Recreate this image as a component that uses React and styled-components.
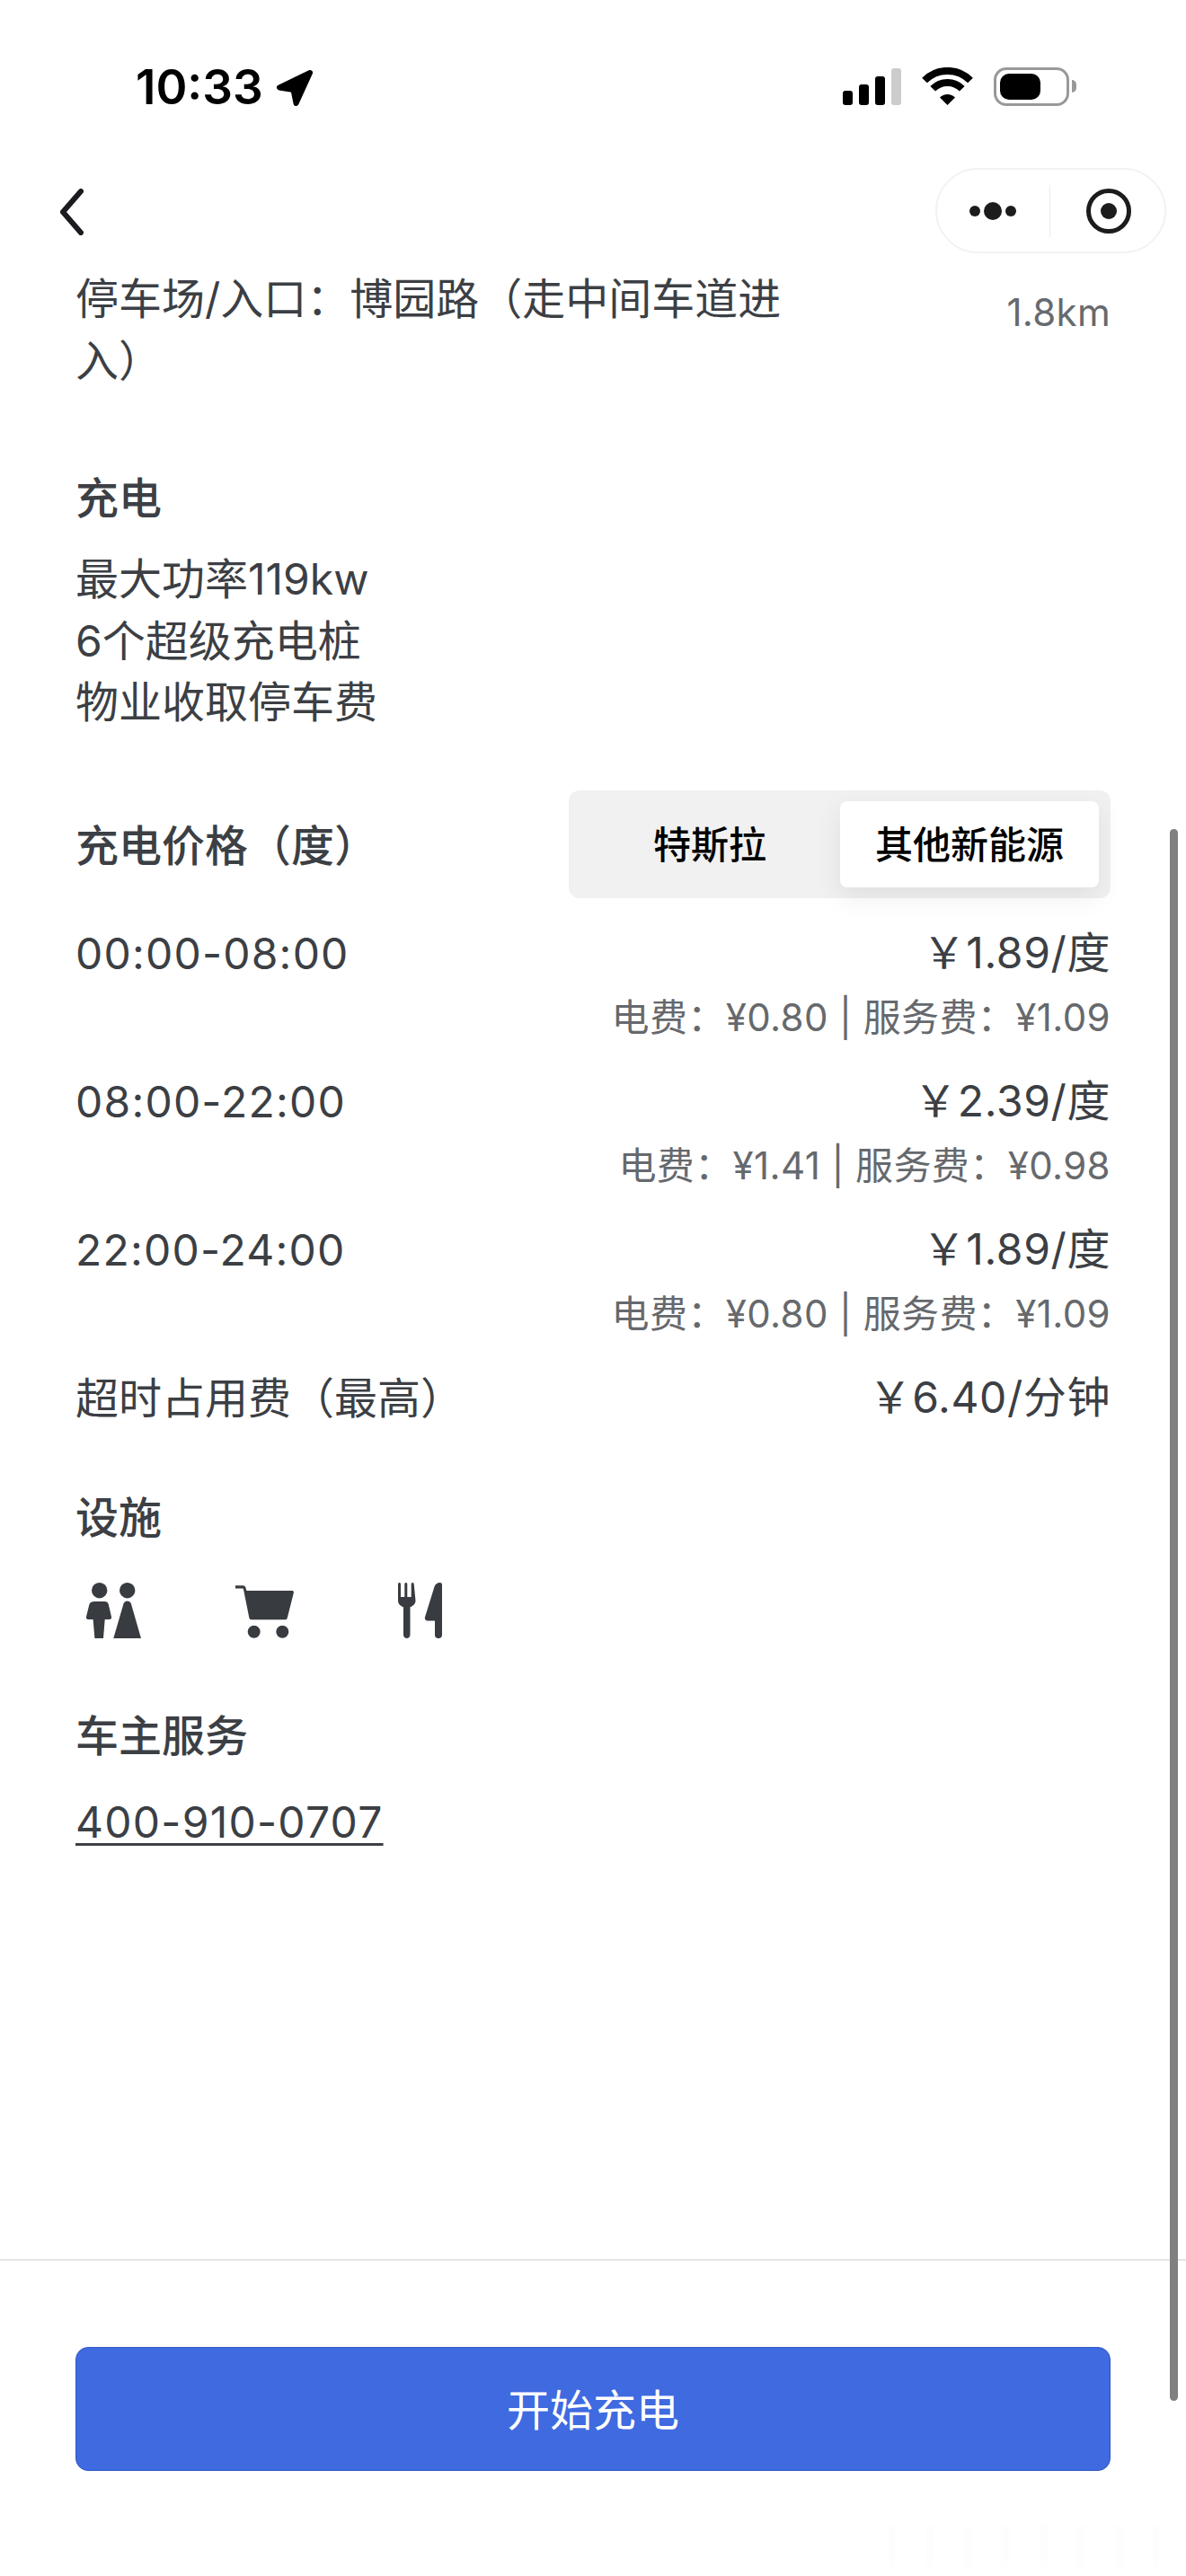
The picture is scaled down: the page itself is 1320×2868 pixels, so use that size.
import React from "react";
import styled, { createGlobalStyle } from "styled-components";

const GlobalStyle = createGlobalStyle`
  html, body {
    margin: 0;
    padding: 0;
    background: #fff;
  }
  * {
    box-sizing: border-box;
  }
`;

const FONT = `Inter, "Noto Sans CJK SC", sans-serif`;

const Page = styled.div`
  position: relative;
  width: 1320px;
  height: 2868px;
  overflow: hidden;
  display: flex;
  flex-direction: column;
  background: #fff;
  color: #3c3f44;
  font-family: ${FONT};
  font-size: 48px;
`;

const StatusBar = styled.div`
  height: 187px;
  padding: 75px 130px 0 151px;
  display: flex;
  justify-content: space-between;
  align-items: flex-start;
`;

const Clock = styled.div`
  display: flex;
  align-items: center;
  gap: 14px;
  color: #000;
  font-size: 53px;
  font-weight: 600;
  line-height: 44px;
`;

const StatusIcons = styled.div`
  display: flex;
  align-items: flex-start;
  gap: 23px;
`;

const Signal = styled.div`
  display: flex;
  align-items: flex-end;
  gap: 7px;
  height: 41px;
  margin-top: 1px;
`;

const SignalBar = styled.span`
  width: 11px;
  height: ${(p) => p.$h}px;
  border-radius: 3px;
  background: ${(p) => (p.$off ? "#cccccc" : "#000")};
`;

const Battery = styled.div`
  position: relative;
  width: 84px;
  height: 43px;
  padding: 4px;
  border: 3px solid #999;
  border-radius: 14px;
  &::after {
    content: "";
    position: absolute;
    top: 11px;
    right: -11px;
    width: 5px;
    height: 14px;
    border-radius: 0 5px 5px 0;
    background: #999;
  }
`;

const BatteryFill = styled.div`
  width: 45px;
  height: 100%;
  border-radius: 10px;
  background: #000;
`;

const NavBar = styled.div`
  height: 111px;
  padding: 0 22px 0 66px;
  display: flex;
  justify-content: space-between;
  align-items: flex-start;
`;

const BackIcon = styled.svg`
  display: block;
  width: 28px;
  height: 52px;
  margin-top: 23px;
`;

const Capsule = styled.div`
  width: 257px;
  height: 95px;
  border: 2px solid #f2f2f2;
  border-radius: 48px;
  display: flex;
  align-items: center;
  background: #fff;
`;

const CapsuleSide = styled.div`
  flex: 1;
  height: 58px;
  display: flex;
  align-items: center;
  justify-content: center;
  &:first-child {
    border-right: 1.5px solid #ececec;
  }
  &:last-child {
    padding-left: 3px;
  }
`;

const Dot = styled.span`
  display: block;
  width: ${(p) => p.$size}px;
  height: ${(p) => p.$size}px;
  border-radius: 50%;
  background: #1c1c1c;
`;

const Dots = styled.div`
  display: flex;
  align-items: center;
  gap: 4px;
`;

const Ring = styled.div`
  width: 50px;
  height: 50px;
  border: 5.5px solid #1c1c1c;
  border-radius: 50%;
  display: flex;
  align-items: center;
  justify-content: center;
`;

const Content = styled.div`
  flex: 1;
  padding: 0 84px;
`;

const AddressRow = styled.div`
  display: flex;
  justify-content: space-between;
  align-items: flex-start;
`;

const Address = styled.div`
  width: 810px;
  line-height: 69px;
`;

const Distance = styled.div`
  margin-top: 28px;
  font-size: 42px;
  line-height: 44px;
  letter-spacing: 0.3px;
  color: #666a6e;
`;

const Heading = styled.div`
  margin-top: ${(p) => p.$top}px;
  font-weight: 500;
  line-height: 69px;
`;

const InfoLines = styled.div`
  margin-top: 22px;
  line-height: 68.5px;
`;

const PriceHeader = styled.div`
  margin-top: 63px;
  height: 120px;
  display: flex;
  justify-content: space-between;
  align-items: center;
`;

const PriceTitle = styled.div`
  padding-bottom: 4px;
  font-weight: 500;
`;

const Segment = styled.div`
  width: 603px;
  height: 120px;
  padding: 12px 13px 12px 12px;
  display: flex;
  border-radius: 12px;
  background: #f1f1f1;
`;

const SegmentItem = styled.div`
  flex: ${(p) => (p.$active ? "0 0 288px" : "1")};
  padding-bottom: 4px;
  display: flex;
  align-items: center;
  justify-content: center;
  border-radius: 8px;
  font-size: 42px;
  font-weight: 500;
  color: #000;
  background: ${(p) => (p.$active ? "#fff" : "transparent")};
  box-shadow: ${(p) => (p.$active ? "0 10px 30px rgba(0, 0, 0, 0.08)" : "none")};
`;

const PriceList = styled.div`
  margin-top: 27px;
  display: flex;
  flex-direction: column;
  gap: 29px;
`;

const PriceRow = styled.div`
  display: flex;
  justify-content: space-between;
  align-items: flex-start;
  line-height: 68px;
`;

const RowLabel = styled.div`
  margin-top: 1px;
`;

const Period = styled(RowLabel)`
  letter-spacing: 1.2px;
`;

const PriceValues = styled.div`
  text-align: right;
`;

const Amount = styled.div`
  letter-spacing: 0.6px;
`;

const SubPrice = styled.div`
  margin-top: 8px;
  font-size: 42px;
  line-height: 60px;
  letter-spacing: 0.4px;
  color: #66696d;
`;

const Facilities = styled.div`
  margin-top: 38px;
  height: 62px;
  display: flex;
  align-items: flex-start;
`;

const FacilityIcon = styled.svg`
  display: block;
  flex: none;
  margin-left: ${(p) => p.$left}px;
  fill: #383b40;
`;

const Phone = styled.a`
  display: inline-block;
  margin-top: 28px;
  line-height: 68px;
  letter-spacing: 1.25px;
  color: #3c3f44;
  text-decoration: underline;
  text-decoration-thickness: 3px;
  text-underline-offset: 6px;
`;

const Footer = styled.div`
  height: 353px;
  padding: 96px 84px 0;
  border-top: 2px solid #e5e5e5;
`;

const StartButton = styled.button`
  display: block;
  width: 100%;
  height: 138px;
  padding: 0 0 4px;
  border: 1.5px solid #2f58c4;
  border-radius: 14px;
  background: #3f6ae0;
  color: #fff;
  font-family: ${FONT};
  font-size: 48px;
  font-weight: 400;
`;

const ScrollThumb = styled.div`
  position: absolute;
  top: 923px;
  left: 1302px;
  width: 9px;
  height: 1750px;
  border-radius: 5px;
  background: #808080;
`;

// faint leftover of a removed watermark, bottom right
const Smudge = styled.div`
  position: absolute;
  top: 2812px;
  left: 990px;
  width: 315px;
  height: 46px;
  filter: blur(3px);
  background: repeating-linear-gradient(90deg, rgba(0, 0, 0, 0.012) 0 6px, transparent 6px 42px);
`;

const prices = [
  { period: "00:00-08:00", price: "\uFFE51.89/度", sub: "电费：¥0.80 | 服务费：¥1.09" },
  { period: "08:00-22:00", price: "\uFFE52.39/度", sub: "电费：¥1.41 | 服务费：¥0.98" },
  { period: "22:00-24:00", price: "\uFFE51.89/度", sub: "电费：¥0.80 | 服务费：¥1.09" },
];

export default function App() {
  return (
    <Page>
      <GlobalStyle />
      <StatusBar>
        <Clock>
          10:33
          <svg width="42" height="41" viewBox="0 0 42 41">
            <path
              d="M38 4 4 20.5 19.5 23 22.5 38Z"
              fill="#000"
              stroke="#000"
              strokeWidth="6"
              strokeLinejoin="round"
            />
          </svg>
        </Clock>
        <StatusIcons>
          <Signal>
            <SignalBar $h={16} />
            <SignalBar $h={23} />
            <SignalBar $h={32} />
            <SignalBar $h={41} $off />
          </Signal>
          <svg width="57" height="42" viewBox="0 0 57 42" fill="none" stroke="#000" strokeWidth="8">
            <path d="M3 14.5A36 36 0 0 1 54 14.5" />
            <path d="M12.2 23.7A23 23 0 0 1 44.8 23.7" />
            <path d="M28.5 42 20 33.5A12 12 0 0 1 37 33.5Z" fill="#000" stroke="none" />
          </svg>
          <Battery>
            <BatteryFill />
          </Battery>
        </StatusIcons>
      </StatusBar>

      <NavBar>
        <BackIcon viewBox="0 0 28 52" fill="none" stroke="#1a1c20" strokeWidth="6" strokeLinecap="round" strokeLinejoin="round">
          <path d="M24 3 4 26l20 23" />
        </BackIcon>
        <Capsule>
          <CapsuleSide>
            <Dots>
              <Dot $size={12} />
              <Dot $size={20} />
              <Dot $size={12} />
            </Dots>
          </CapsuleSide>
          <CapsuleSide>
            <Ring>
              <Dot $size={18} />
            </Ring>
          </CapsuleSide>
        </Capsule>
      </NavBar>

      <Content>
        <AddressRow>
          <Address>停车场/入口：博园路（走中间车道进入）</Address>
          <Distance>1.8km</Distance>
        </AddressRow>

        <Heading $top={84}>充电</Heading>
        <InfoLines>
          <div>最大功率119kw</div>
          <div>6个超级充电桩</div>
          <div>物业收取停车费</div>
        </InfoLines>

        <PriceHeader>
          <PriceTitle>充电价格（度）</PriceTitle>
          <Segment>
            <SegmentItem>特斯拉</SegmentItem>
            <SegmentItem $active>其他新能源</SegmentItem>
          </Segment>
        </PriceHeader>

        <PriceList>
          {prices.map((row) => (
            <PriceRow key={row.period}>
              <Period>{row.period}</Period>
              <PriceValues>
                <Amount>{row.price}</Amount>
                <SubPrice>{row.sub}</SubPrice>
              </PriceValues>
            </PriceRow>
          ))}
          <PriceRow>
            <RowLabel>超时占用费（最高）</RowLabel>
            <Amount>{"\uFFE56.40/分钟"}</Amount>
          </PriceRow>
        </PriceList>

        <Heading $top={64}>设施</Heading>
        <Facilities>
          <FacilityIcon $left={12} width="61" height="62" viewBox="0 0 61 62">
            <circle cx="14.7" cy="8.7" r="8.7" />
            <circle cx="45.7" cy="8.7" r="8.7" />
            <path d="M9 21h11.5c2.2 0 3.6 1.2 4.3 3.2L28 38c.4 2-.6 3-2.6 3h-4.7l-1.7 21H9.4L7.6 41H2.6C.6 41-.4 40 0 38l3.4-13.8C4 22.2 6.8 21 9 21Z" />
            <path d="M45.7 20.5c2 0 3.4 1 4.2 3L61 62H30.3l11.2-38.5c.8-2 2.2-3 4.2-3Z" />
          </FacilityIcon>
          <FacilityIcon $left={105} width="65" height="62" viewBox="0 0 65 62">
            <path d="M0 3.3h8.5c1.6 0 2.6 1 3 2.5L12.4 9H63c1.4 0 2.2 1 1.8 2.6l-7 27.6c-.4 1.4-1.2 2.1-2.6 2.1H17.8c-1.4 0-2.2-.8-2.5-2.2L9 7.4c-.2-.7-.5-1-1.2-1H0Z" />
            <circle cx="20.7" cy="54.7" r="7" />
            <circle cx="52.3" cy="54.7" r="7" />
          </FacilityIcon>
          <FacilityIcon $left={116} width="49" height="62" viewBox="0 0 49 62">
            <path d="M0 1.5a1.5 1.5 0 0 1 3 0V16h4.3V1.500a1.500 1.500 0 0 1 3 0V16h4.400V1.500a1.500 1.500 0 0 1 3 0L19.500 20c0 3.500-2.400 6-6 7.200V58c0 5.300-7.500 5.300-7.500 0V27.200C2.400 26 0 23.500 0 20Z" />
            <path d="M49 2v56.500c0 4.700-8 4.700-8 0V42.500H33c-2.600 0-3.600-2-3-4L40.500 4.500C41.500 1.500 44 0 46.500 0 48 0 49 .8 49 2Z" />
          </FacilityIcon>
        </Facilities>

        <Heading $top={74}>车主服务</Heading>
        <Phone href="#">400-910-0707</Phone>
      </Content>

      <Footer>
        <StartButton>开始充电</StartButton>
      </Footer>

      <ScrollThumb />
      <Smudge />
    </Page>
  );
}
